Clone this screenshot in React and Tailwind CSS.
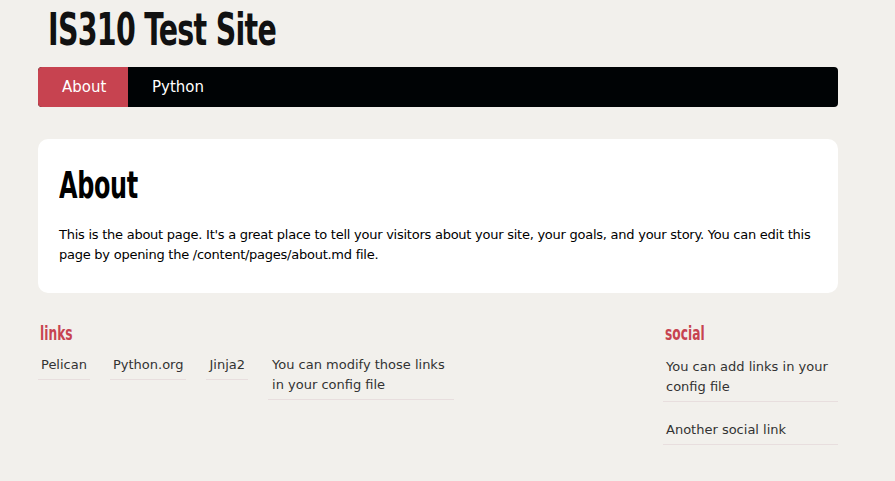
const HEAD = { fontFamily: '"DejaVu Sans Condensed", "Liberation Sans", sans-serif' };
const BODY = { fontFamily: '"DejaVu Sans", "Liberation Sans", sans-serif' };

const LINKS = ["Pelican", "Python.org", "Jinja2"];
const SOCIAL = ["You can add links in your config file", "Another social link"];

export default function App() {
  return (
    <div className="min-h-[481px] bg-[#f2f0ec] text-black" style={BODY}>
      <div className="w-[800px] ml-[38px]">
        <header className="pt-[6px] pl-[10px] h-[67px]">
          <h1 className="text-[44px] leading-[48px] tracking-[-1px] text-[#111] font-bold scale-x-[0.72] origin-left whitespace-nowrap" style={HEAD}>
            IS310 Test Site
          </h1>
        </header>

        <nav className="flex h-[40px] rounded-[4px] bg-[#000305] overflow-hidden">
          <a className="flex items-center bg-[#c74350] w-[90px] pl-[24px] text-[15px] text-white">About</a>
          <a className="flex items-center pl-[24px] text-[15px] text-white">Python</a>
        </nav>

        <section className="mt-[32px] bg-white rounded-[10px] px-[21px] pt-[24px] pb-[28px]">
          <h2 className="text-[38px] leading-[44px] text-black font-bold tracking-[-0.5px] scale-x-[0.7] origin-left" style={HEAD}>About</h2>
          <p className="mt-[18px] text-[13px] leading-[20px] tracking-[-0.25px]">
            This is the about page. It's a great place to tell your visitors about your site, your goals, and your story. You can edit this page by opening the /content/pages/about.md file.
          </p>
        </section>

        <footer className="mt-[28px] flex justify-between text-[#333] text-[13px] leading-[20px]">
          <div>
            <h3 className="pl-[3px] text-[20px] leading-[24px] text-[#c74350] font-bold scale-x-[0.68] origin-left" style={HEAD}>links</h3>
            <ul className="mt-[10px] flex gap-[20px] items-start">
              {LINKS.map((l) => (
                <li key={l} className="px-[3px] pb-[4px] border-b border-[#e8dede]">{l}</li>
              ))}
              <li className="px-[4px] pb-[4px] w-[186px] border-b border-[#e8dede]">
                You can modify those links in your config file
              </li>
            </ul>
          </div>
          <div className="w-[175px]">
            <h3 className="pl-[3px] text-[20px] leading-[24px] text-[#c74350] font-bold scale-x-[0.68] origin-left" style={HEAD}>social</h3>
            <ul className="mt-[12px]">
              {SOCIAL.map((s, i) => (
                <li key={s} className={`px-[3px] pb-[4px] border-b border-[#e8dede] ${i ? "mt-[18px]" : ""}`}>{s}</li>
              ))}
            </ul>
          </div>
        </footer>
      </div>
    </div>
  );
}
